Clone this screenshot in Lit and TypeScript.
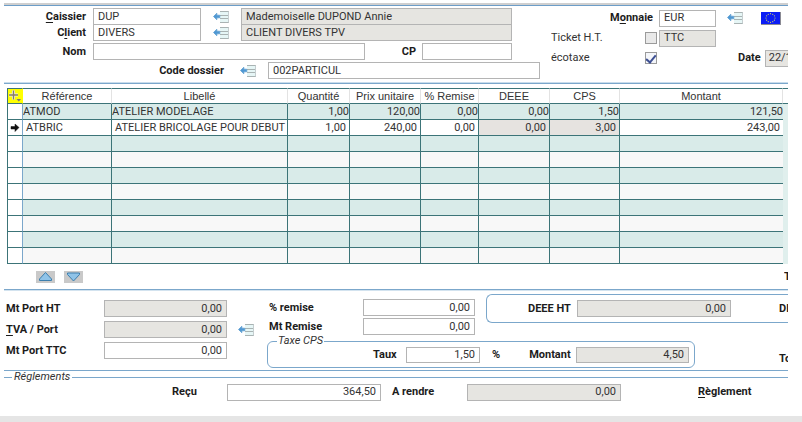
import { LitElement, html, css, svg } from "lit";
import { customElement, property } from "lit/decorators.js";
import { classMap } from "lit/directives/class-map.js";

/** Small "pick from list" button shown next to lookup fields. */
@customElement("lookup-button")
class LookupButton extends LitElement {
  @property() label = "";
  static styles = css`
    :host { display: block; width: 17px; height: 14px; flex: none; }
    button { display: block; width: 100%; height: 100%; padding: 0; border: 0; background: none; }
    svg { display: block; }
  `;
  render() {
    return html`<button aria-label=${this.label}>
      <svg width="17" height="14" viewBox="0 0 17 14">
        <path d="M7 1.5H16V12.5H7Z" fill="#e6f6f6" />
        <path d="M7 1.5H16M7 5.5H16M7 8.5H16M7 12.5H16" stroke="#a9b3b3" fill="none" />
        <path d="M15.5 1.5V12.5" stroke="#c5ced0" fill="none" />
        <path d="M0.5 6.5L3.8 3.2V5.2H6.8V7.8H3.8V9.8Z" fill="#4f98d4" stroke="#5f9fd0" stroke-width=".8" />
      </svg>
    </button>`;
  }
}

interface Line { cells: string[]; active?: boolean; }

const HEADERS = ["Référence", "Libellé", "Quantité", "Prix unitaire", "% Remise", "DEEE", "CPS", "Montant"];
const LINES: Line[] = [
  { cells: ["ATMOD", "ATELIER MODELAGE", "1,00", "120,00", "0,00", "0,00", "1,50", "121,50"] },
  { cells: ["ATBRIC", "ATELIER BRICOLAGE POUR DEBUT", "1,00", "240,00", "0,00", "0,00", "3,00", "243,00"], active: true },
  ...Array.from({ length: 8 }, () => ({ cells: Array(8).fill("") })),
];
const STARS = Array.from({ length: 12 }, (_, i) => {
  const a = (i * Math.PI) / 6;
  return { x: 9.5 + 4.5 * Math.cos(a), y: 6 + 4.3 * Math.sin(a) };
});

@customElement("app-root")
class AppRoot extends LitElement {
  static styles = css`
    :host {
      display: flex; flex-direction: column; min-height: 100vh; box-sizing: border-box;
      background: #fff; color: #333; overflow: hidden;
      font: 11px/14px Roboto, "Liberation Sans", sans-serif;
    }
    * { box-sizing: border-box; }
    main { flex: 1; margin: 3px 14px 0 4px; min-width: 0; overflow: hidden; }
    footer { height: 6px; background: #e5e5e5; }
    label, .caption { font-weight: 700; color: #1c1c1c; white-space: nowrap; flex: none; }
    label.plain { font-weight: 400; color: #333; }
    u { text-underline-offset: 2px; }
    input { font: inherit; color: inherit; margin: 0; min-width: 0; }
    input[type="text"] {
      height: 17px; padding: 0 4px 1px; border: 1px solid #b4b4b4; border-radius: 0;
      background: #fff; outline: none; flex: none;
    }
    input[type="text"][readonly] { background: #e6e5e1; }
    input.num { text-align: right; }
    input[type="checkbox"] {
      appearance: none; width: 12px; height: 12px; border: 1px solid #9b9b9b;
      background: #e9e9e9; display: grid; place-items: center; flex: none;
    }
    input[type="checkbox"]:checked { background: #f4f6fa; }
    input[type="checkbox"]:checked::before {
      content: ""; width: 4px; height: 8px; border: solid #3d4f93;
      border-width: 0 2px 2px 0; transform: rotate(40deg); margin-bottom: 2px;
    }
    .row { display: flex; align-items: center; height: 17px; }
    .grow { flex: 1 1 0 !important; }

    .head {
      display: flex; gap: 11px; height: 81px; padding-top: 3px;
      border-top: 2px solid #cfcfcf; border-bottom: 1px solid #7ba7cb;
      box-shadow: inset 0 1px #6c9dc8, inset 0 -1px #c8dceb;
    }
    .ident { flex: 1; min-width: 0; }
    .ident .row { padding-right: 28px; }
    .ident .row label:first-child { width: 82px; margin-right: 7px; text-align: right; }
    .ident .joined { margin-bottom: -1px; }
    .ident .spaced { margin-top: 2px; }
    .ident .row.dossier { padding-right: 0; }
    .ident .row.dossier label:first-child { width: 220px; margin-right: 16px; }
    .code { width: 108px; }
    .ident lookup-button { margin: 0 11px 0 12px; }
    .ident .dossier lookup-button { margin-left: 0; }
    .cp { margin: 0 6px 0 37px; }
    .cpbox { width: 90px; }
    .options { width: 237px; flex: none; overflow: hidden; }
    .options .row { height: 20px; }
    .options .money { width: 102px; text-align: right; margin-right: 6px; }
    .options .plain { width: 94px; }
    .options .unit { width: 57px; margin-left: 2px; }
    .options .money + .unit { margin: 0 11px 0 0; }
    .options .flag { margin-left: 17px; flex: none; }
    .options .date { margin: 0 4px 0 81px; }
    .options .datebox { width: 72px; padding-left: 3px; }

    table {
      table-layout: fixed; width: 100%; border-spacing: 0; margin-top: 4px; padding-left: 3px;
    }
    th, td { height: 16px; padding: 0; overflow: hidden; white-space: nowrap; line-height: 14px; }
    th {
      font: 11px/14px "Liberation Sans", sans-serif; text-align: center;
      border-top: 1px solid #3c7478; border-bottom: 1px solid #3c7478; border-right: 1px solid #e3e3e3;
    }
    th:first-child { border-left: 1px solid #3c7478; background: #ff0; border-right-color: #ff0; }
    th:last-child { border-right: 0; }
    th svg, td svg { display: block; margin: auto; }
    td { border-right: 1px solid #3c7478; border-bottom: 1px solid #3c7478; background: #f8f8f8; }
    tr:nth-child(odd) td { background: #d9ebe9; }
    tr.active td { background: #fff; padding: 0 3px; }
    tr.active td.tax { background: #e6e3e0; }
    tbody tr td:first-child { background: #fff; border-left: 1px solid #3c7478; border-right-color: #7ba7cb; padding: 0; }
    td.num { text-align: right; }
    td.total { border-right: 0; }
    tbody tr td.edge { background: #e0efed; border: 0; }
    .c0 { width: 16px; } .c1 { width: 89px; } .c2 { width: 176px; } .c3 { width: 62px; }
    .c4 { width: 71px; } .c5 { width: 58px; } .c6 { width: 71px; } .c7 { width: 70px; } .c9 { width: 5px; }

    .moves { display: flex; align-items: center; gap: 9px; height: 25px; padding-left: 32px; }
    .moves button { width: 19px; height: 12px; padding: 0; border: 0; background: #c9c9c9; }
    .moves svg { display: block; }
    .moves .caption { margin-left: auto; width: 4px; overflow: hidden; }

    .sums {
      display: flex; height: 82px; border-top: 1px solid #7ba7cb; border-bottom: 1px solid #7ba7cb;
      box-shadow: inset 0 1px #d3e3ef;
    }
    .port { width: 263px; flex: none; display: grid; align-content: start; gap: 4px; padding: 10px 0 0 2px; }
    .port label { width: 98px; }
    .port input { width: 123px; }
    .port lookup-button { margin-left: 11px; }
    .detail { flex: 1; min-width: 0; overflow: hidden; }
    .upper { display: flex; gap: 10px; padding: 4px 0 0 2px; }
    .remise { display: grid; gap: 2px; padding-top: 5px; width: 207px; flex: none; }
    .remise label { width: 94px; }
    .remise input { width: 112px; }
    .deee {
      flex: 1; height: 29px; display: flex; align-items: center; min-width: 0; overflow: hidden;
      border: 1px solid #7ba7cb; border-right: 0; border-radius: 6px 0 0 6px; padding-left: 41px;
    }
    .deee label { width: 49px; }
    .deee .caption { margin-left: 48px; }
    .lower { display: flex; align-items: flex-end; }
    fieldset { margin: 0; min-width: 0; border: 1px solid #7ba7cb; }
    legend { font-style: italic; color: #333; padding: 0 1px; line-height: 12px; height: 12px; }
    .cps {
      width: 428px; flex: none; border-radius: 6px; height: 33px;
      padding: 0 5px 0 0;
    }
    .cps legend { margin-left: 9px; }
    .cps .row { height: 16px; }
    .cps .row label:first-child { margin-left: 105px; width: 33px; }
    .cps .rate { width: 74px; }
    .cps .pct { margin: 0 29px 0 12px; }
    .cps .row .amount { width: 47px; }
    .cps .row input { height: 16px; }
    .lower > .caption { margin-left: 84px; height: 16px; }
    .pay { border-width: 1px 0 0; padding: 0; }
    .pay legend { margin-left: 8px; padding: 0 2px; }
    .pay .row { height: 18px; }
    .pay .row label:first-child { margin-left: 168px; width: 55px; }
    .pay .given { width: 154px; }
    .pay .back { margin-left: 11px; width: 75px; }
    .due { width: 154px; }
    .pay .mode { margin-left: 77px; }
  `;

  private grid() {
    return html`<table>
      <colgroup>
        ${[0, 1, 2, 3, 4, 5, 6, 7, 8, 9].map((n) => html`<col class="c${n}" />`)}
      </colgroup>
      <thead>
        <tr>
          <th aria-label="Ajouter">
            <svg width="14" height="14" viewBox="0 0 14 14">
              <path d="M5.5 1.5V10.5M1 6H10" stroke="#eee" stroke-width="3" />
              <path d="M5.5 1.5V10.5M1 6H10" stroke="#8a7f5c" stroke-width="1.4" />
              <path d="M8.5 10H13L10.8 12.5Z" fill="#777" />
            </svg>
          </th>
          ${HEADERS.map((h) => html`<th scope="col">${h}</th>`)}
          <th></th>
        </tr>
      </thead>
      <tbody>
        ${LINES.map((line) => html`<tr class=${classMap({ active: !!line.active })}>
          <td>${line.active
            ? html`<svg width="10" height="9" viewBox="0 0 10 9">
                <path d="M1 3.5H5V1L9 4.5L5 8.5V6H1Z" fill="#111" stroke="#111" stroke-width=".5" />
              </svg>`
            : ""}</td>
          ${line.cells.map((c, i) => html`<td class=${classMap({
            num: i > 1, tax: i === 5 || i === 6, total: i === 7,
          })}>${c}</td>`)}
          <td class="edge"></td>
        </tr>`)}
      </tbody>
    </table>`;
  }

  render() {
    return html`
      <main>
        <section class="head">
          <div class="ident">
            <div class="row joined">
              <label for="caissier"><u>C</u>aissier</label>
              <input class="code" id="caissier" type="text" value="DUP" />
              <lookup-button label="Choisir le caissier"></lookup-button>
              <input class="grow" type="text" aria-label="Nom du caissier" readonly value="Mademoiselle DUPOND Annie" />
            </div>
            <div class="row">
              <label for="client">C<u>l</u>ient</label>
              <input class="code" id="client" type="text" value="DIVERS" />
              <lookup-button label="Choisir le client"></lookup-button>
              <input class="grow" type="text" aria-label="Nom du client" readonly value="CLIENT DIVERS TPV" />
            </div>
            <div class="row spaced">
              <label for="nom">Nom</label>
              <input class="grow" id="nom" type="text" />
              <label class="cp" for="cp">CP</label>
              <input class="cpbox" id="cp" type="text" />
            </div>
            <div class="row spaced dossier">
              <label for="dossier">Code dossier</label>
              <lookup-button label="Choisir le dossier"></lookup-button>
              <input class="grow" id="dossier" type="text" value="002PARTICUL" />
            </div>
          </div>
          <div class="options">
            <div class="row">
              <label class="money" for="monnaie">M<u>o</u>nnaie</label>
              <input class="unit" id="monnaie" type="text" value="EUR" />
              <lookup-button label="Choisir la monnaie"></lookup-button>
              <svg class="flag" width="20" height="13" viewBox="0 0 20 13">
                <rect width="20" height="13" fill="#8a8a94" />
                <rect width="19" height="12" fill="#0b1df5" />
                ${STARS.map((s) => svg`<circle cx=${s.x} cy=${s.y} r=".6" fill="#d8d860" />`)}
              </svg>
            </div>
            <div class="row">
              <label class="plain" for="ht">Ticket H.T.</label>
              <input id="ht" type="checkbox" />
              <input class="unit" type="text" aria-label="Mode de prix" readonly value="TTC" />
            </div>
            <div class="row">
              <label class="plain" for="eco">écotaxe</label>
              <input id="eco" type="checkbox" checked />
              <label class="date" for="date">Date</label>
              <input class="datebox" id="date" type="text" readonly value="22/12/2011" />
            </div>
          </div>
        </section>

        ${this.grid()}

        <div class="moves">
          <button aria-label="Monter">
            <svg width="19" height="12" viewBox="0 0 19 12">
              <path d="M9.5 1.5L15.5 8V9.5H3.5V8Z" fill="#8fc3e8" stroke="#3d7fae" stroke-linejoin="round" />
            </svg>
          </button>
          <button aria-label="Descendre">
            <svg width="19" height="12" viewBox="0 0 19 12">
              <path d="M9.5 10L15.5 3.5V2H3.5V3.5Z" fill="#8fc3e8" stroke="#3d7fae" stroke-linejoin="round" />
            </svg>
          </button>
          <span class="caption">Total</span>
        </div>

        <section class="sums">
          <div class="port">
            <div class="row">
              <label for="pht">Mt Port HT</label>
              <input class="num" id="pht" type="text" readonly value="0,00" />
            </div>
            <div class="row">
              <label for="tva"><u>T</u>VA / Port</label>
              <input class="num" id="tva" type="text" readonly value="0,00" />
              <lookup-button label="Choisir la TVA"></lookup-button>
            </div>
            <div class="row">
              <label for="pttc">Mt Port TTC</label>
              <input class="num" id="pttc" type="text" value="0,00" />
            </div>
          </div>
          <div class="detail">
            <div class="upper">
              <div class="remise">
                <div class="row">
                  <label for="pr">% remise</label>
                  <input class="num" id="pr" type="text" value="0,00" />
                </div>
                <div class="row">
                  <label for="mr">Mt Remise</label>
                  <input class="num" id="mr" type="text" value="0,00" />
                </div>
              </div>
              <div class="deee">
                <label for="deee">DEEE HT</label>
                <input class="num due" id="deee" type="text" readonly value="0,00" />
                <span class="caption">DEEE TTC</span>
              </div>
            </div>
            <div class="lower">
              <fieldset class="cps">
                <legend>Taxe CPS</legend>
                <div class="row">
                  <label for="taux">Taux</label>
                  <input class="num rate" id="taux" type="text" value="1,50" />
                  <span class="caption pct">%</span>
                  <label class="amount" for="cpsm">Montant</label>
                  <input class="num grow" id="cpsm" type="text" readonly value="4,50" />
                </div>
              </fieldset>
              <span class="caption">Total TTC</span>
            </div>
          </div>
        </section>

        <fieldset class="pay">
          <legend>Réglements</legend>
          <div class="row">
            <label for="recu">Reçu</label>
            <input class="num given" id="recu" type="text" value="364,50" />
            <label class="back" for="rendre">A rendre</label>
            <input class="num due" id="rendre" type="text" readonly value="0,00" />
            <span class="caption mode"><u>R</u>èglement</span>
          </div>
        </fieldset>
      </main>
      <footer></footer>
    `;
  }
}
